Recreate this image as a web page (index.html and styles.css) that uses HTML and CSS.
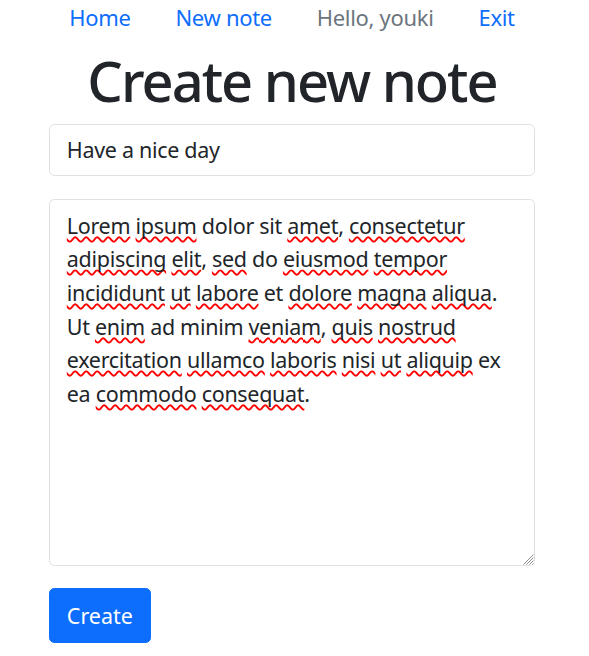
FILE: index.html
```html
<!DOCTYPE html>
<html lang="en">
<head>
<meta charset="utf-8">
<title>Create new note</title>
<link rel="stylesheet" href="styles.css">
</head>
<body>
<div class="page">
  <nav class="nav">
    <a class="nav-link" href="#">Home</a>
    <a class="nav-link" href="#">New note</a>
    <span class="nav-link muted">Hello, youki</span>
    <a class="nav-link" href="#">Exit</a>
  </nav>
  <main class="container">
    <h1 class="title">Create new note</h1>
    <form class="note-form">
      <div class="field">Have a nice day</div>
      <div class="area">
        <div class="area-text"><span class="sp">Lorem</span> <span class="sp">ipsum</span> dolor sit <span class="sp">amet</span>, <span class="sp">consectetur</span><br><span class="sp">adipiscing</span> <span class="sp">elit</span>, <span class="sp">sed</span> do <span class="sp">eiusmod</span> <span class="sp">tempor</span><br><span class="sp">incididunt</span> <span class="sp">ut</span> <span class="sp">labore</span> et <span class="sp">dolore</span> <span class="sp">magna</span> <span class="sp">aliqua</span>.<br>Ut <span class="sp">enim</span> ad minim <span class="sp">veniam</span>, <span class="sp">quis</span> <span class="sp">nostrud</span><br><span class="sp">exercitation</span> <span class="sp">ullamco</span> <span class="sp">laboris</span> <span class="sp">nisi</span> <span class="sp">ut</span> <span class="sp">aliquip</span> ex<br>ea <span class="sp">commodo</span> <span class="sp">consequat</span>.</div>
        <svg class="grip" width="13" height="13" viewBox="0 0 13 13"><path d="M12.5 2.5 L2.5 12.5 M12.5 5.5 L5.5 12.5 M12.5 8.5 L8.5 12.5 M12.5 11.5 L11.5 12.5" stroke="#909090" stroke-width="1" fill="none"/></svg>
      </div>
      <button class="btn" type="button">Create</button>
    </form>
  </main>
</div>
</body>
</html>
```
FILE: styles.css
```css
html, body {
  margin: 0;
  padding: 0;
  background: #fff;
}
body {
  font-family: "Noto Sans", "Open Sans", sans-serif;
  color: #212529;
  font-size: 21.5px;
  letter-spacing: -0.3px;
}
.page {
  width: 584px;
}
.nav {
  display: flex;
  justify-content: center;
  padding-top: 1px;
}
.nav-link {
  padding: 0 22.4px;
  font-size: 22px;
  line-height: 33.6px;
  color: #0d6efd;
  text-decoration: none;
}
.nav-link.muted {
  color: #6c757d;
}
.container {
  padding: 0 49px;
}
.title {
  margin: 6px 0 5.5px;
  text-align: center;
  font-size: 56px;
  font-weight: 500;
  letter-spacing: -2px;
  line-height: 78px;
}
.note-form {
  display: flex;
  flex-direction: column;
  align-items: flex-start;
}
.field {
  align-self: stretch;
  border: 1px solid #dee2e6;
  border-radius: 5.25px;
  padding: 8.4px 16.8px;
  line-height: 33.6px;
  margin-bottom: 23px;
}
.area {
  position: relative;
  align-self: stretch;
  box-sizing: border-box;
  height: 367px;
  border: 1px solid #dee2e6;
  border-radius: 5.25px;
  padding: 8.4px 16.8px;
  line-height: 33.6px;
  margin-bottom: 22px;
}
.area-text {
  white-space: nowrap;
}
.sp {
  text-decoration: underline wavy #ff0000;
  text-decoration-thickness: 1.6px;
  text-underline-offset: 2px;
  text-decoration-skip-ink: none;
}
.grip {
  position: absolute;
  right: 0;
  bottom: 0;
}
.btn {
  font: inherit;
  color: #fff;
  background: #0d6efd;
  border: 1px solid #0d6efd;
  border-radius: 5.25px;
  padding: 9.4px 16.8px;
  line-height: 33.6px;
  cursor: pointer;
}
```
